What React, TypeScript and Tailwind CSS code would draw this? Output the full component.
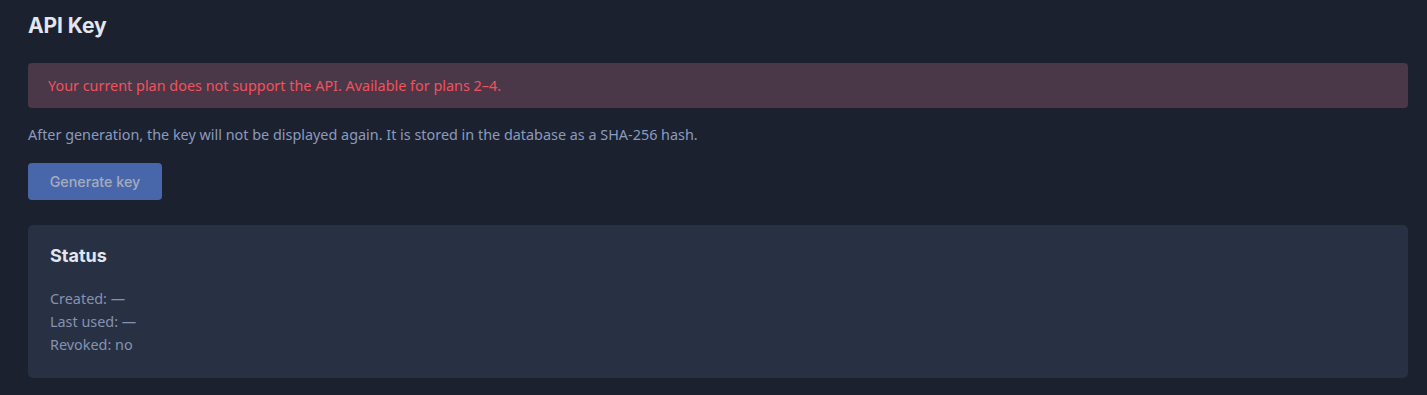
export default function App() {
  return (
    <div className="min-h-[395px] w-full bg-[#1c2130] pl-[28px] pr-[19px] pt-[13px] pb-[18px] font-['Noto_Sans',sans-serif]">
      <h1 className="text-[21px] font-bold leading-[26px] text-[#e2e6ee] font-['Inter',sans-serif] tracking-[-0.1px]">API Key</h1>
      <div className="mt-[24px] flex h-[45px] items-center rounded-[4px] bg-[#4a3747] px-[20px] text-[14.4px] text-[#f0525e]">
        Your current plan does not support the API. Available for plans 2–4.
      </div>
      <p className="mt-[15px] text-[14.4px] leading-[24px] text-[#8a9bbd]">
        After generation, the key will not be displayed again. It is stored in the database as a SHA-256 hash.
      </p>
      <button className="mt-[16px] h-[37px] w-[134px] rounded-[4px] bg-[#4867ab] text-[14.3px] font-medium text-[#a3acbd] font-['Inter',sans-serif]">
        Generate key
      </button>
      <div className="mt-[25px] rounded-[5px] bg-[#283044] px-[22px] pt-[19px] pb-[22px]">
        <h2 className="text-[18px] font-bold leading-[24px] text-[#e2e6ee] font-['Inter',sans-serif]">Status</h2>
        <div className="mt-[19px] flex flex-col text-[14.4px] leading-[23px] text-[#8593b0]">
          <span>Created: —</span>
          <span>Last used: —</span>
          <span>Revoked: no</span>
        </div>
      </div>
    </div>
  );
}
